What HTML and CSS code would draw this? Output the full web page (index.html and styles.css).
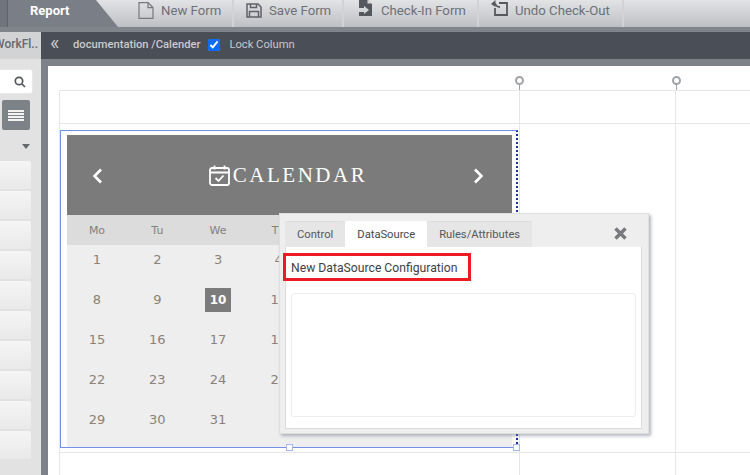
FILE: index.html
```html
<!DOCTYPE html>
<html lang="en">
<head>
    <meta charset="UTF-8">
    <meta name="viewport" content="width=device-width, initial-scale=1.0">
    <title>Form Designer</title>
    <link rel="stylesheet" href="styles.css">
</head>
<body>
    <div class="topbar">
        <div class="report-tab">Report</div>
        <a class="tool tool-new">
            <svg width="16" height="17" viewBox="0 0 16 17" fill="none" stroke="#77797e" stroke-width="1.200"><path d="M1 .6h9l5 5v10.800H1z"/><path d="M10 .6v5h5"/></svg>
            New Form
        </a>
        <a class="tool tool-save">
            <svg width="16" height="15" viewBox="0 0 16 15" fill="none" stroke="#5f6268" stroke-width="1.500"><path d="M1 1h11l3 3v10H1z"/><path d="M4.500 1v3.500h6V1M3.500 14V8.500h9V14"/></svg>
            Save Form
        </a>
        <a class="tool tool-checkin">
            <svg class="icon-up" width="15" height="17" viewBox="0 0 15 17"><path fill="#55585e" d="M1 0h8l5 5v12H1v-4h5v2l5-4-5-4v2H1z"/><path fill="#d8d9db" d="M9.500 .5V4.500H14z"/></svg>
            Check-In Form
        </a>
        <a class="tool tool-undo">
            <svg class="icon-up" width="17" height="16" viewBox="0 0 17 16" fill="none" stroke="#55585e" stroke-width="1.800"><path d="M4 8v7h12V3H8"/><path d="M9 7C6 7 5 6 4 3.500"/><path fill="#55585e" stroke="none" d="M0 4 4.500 0v7z"/></svg>
            Undo Check-Out
        </a>
    </div>

    <div class="main">
        <div class="sidebar">
            <div class="side-tab">WorkFl..</div>
            <div class="side-search">
                <svg width="12" height="12" viewBox="0 0 12 12" fill="none" stroke="#55585e" stroke-width="1.700"><circle cx="5" cy="5" r="3.700"/><path d="M7.800 7.800 11 11"/></svg>
            </div>
            <div class="side-view">
                <span></span><span></span><span></span><span></span>
            </div>
            <div class="side-caret"></div>
            <div class="side-list">
                <div class="side-item"></div>
                <div class="side-item"></div>
                <div class="side-item"></div>
                <div class="side-item"></div>
                <div class="side-item"></div>
                <div class="side-item"></div>
                <div class="side-item"></div>
                <div class="side-item"></div>
                <div class="side-item"></div>
                <div class="side-item"></div>
            </div>
        </div>

        <div class="workspace">
            <div class="crumbbar">
                <span class="collapse">«</span>
                <span class="crumb">documentation /Calender</span>
                <input type="checkbox" class="lock-check" checked>
                <span class="lock-label">Lock Column</span>
            </div>

            <div class="canvas-frame">
                <div class="canvas">
                    <div class="grid">
                        <div class="cell"></div>
                        <div class="cell"></div>
                        <div class="cell"></div>

                        <div class="cell">
                            <div class="control">
                                <div class="calendar">
                                    <div class="cal-head">
                                        <span class="cal-nav">
                                            <svg width="11" height="16" viewBox="0 0 11 16" fill="none" stroke="#fff" stroke-width="2.600"><path d="M9 1.500 2.500 8 9 14.500"/></svg>
                                        </span>
                                        <div class="cal-title">
                                            <svg width="21" height="21" viewBox="0 0 21 21" fill="none" stroke="#fff" stroke-width="1.800"><rect x="1" y="3" width="19" height="17" rx="2"/><path d="M5.500 0.500v4M15.500 0.500v4M1 7.500h19"/><path d="M6.500 13l3 3 5-5.500"/></svg>
                                            <span>CALENDAR</span>
                                        </div>
                                        <span class="cal-nav">
                                            <svg width="11" height="16" viewBox="0 0 11 16" fill="none" stroke="#fff" stroke-width="2.600"><path d="M2 1.500 8.500 8 2 14.500"/></svg>
                                        </span>
                                    </div>
                                    <div class="cal-week">
                                        <span>Mo</span><span>Tu</span><span>We</span><span>Th</span><span>Fr</span><span>Sa</span><span>Su</span>
                                    </div>
                                    <div class="cal-days">
                                        <span>1</span><span>2</span><span>3</span><span>4</span><span>5</span><span>6</span><span>7</span>
                                        <span>8</span><span>9</span><span class="today">10</span><span>11</span><span>12</span><span>13</span><span>14</span>
                                        <span>15</span><span>16</span><span>17</span><span>18</span><span>19</span><span>20</span><span>21</span>
                                        <span>22</span><span>23</span><span>24</span><span>25</span><span>26</span><span>27</span><span>28</span>
                                        <span>29</span><span>30</span><span>31</span>
                                    </div>
                                </div>
                            </div>
                        </div>
                        <div class="cell"></div>
                        <div class="cell"></div>

                        <div class="cell"></div>
                        <div class="cell"></div>
                        <div class="cell"></div>
                    </div>

                    <span class="pin pin-a"></span>
                    <span class="pin pin-b"></span>
                    <span class="handle handle-mid"></span>
                    <span class="handle handle-end"></span>

                    <div class="popup">
                        <div class="popup-tabs">
                            <a class="popup-tab">Control</a>
                            <a class="popup-tab active">DataSource</a>
                            <a class="popup-tab">Rules/Attributes</a>
                            <svg class="popup-close" width="13" height="13" viewBox="0 0 13 13" stroke="#77797e" stroke-width="3.400"><path d="M1.500 1.500l10 10M11.500 1.500l-10 10"/></svg>
                        </div>
                        <div class="popup-body">
                            <div class="ds-title">New DataSource Configuration</div>
                            <div class="ds-box"></div>
                        </div>
                    </div>
                </div>
            </div>
        </div>
    </div>
</body>
</html>
```

FILE: styles.css
```css
html, body {
    margin: 0;
    padding: 0;
    height: 100%;
    overflow: hidden;
}

body {
    font-family: Roboto, "Liberation Sans", sans-serif;
    background-color: #fff;
}

/* top toolbar */
.topbar {
    display: flex;
    align-items: stretch;
    height: 27px;
    background: linear-gradient(#e2e3e5, #bfc0c4);
    border-bottom: 5px solid #80848b;
}

.report-tab {
    width: 88px;
    padding-left: 30px;
    line-height: 21px;
    font-size: 13px;
    font-weight: 700;
    color: #fff;
    background: linear-gradient(90deg, #70747c 7px, #5f636b 7px, #5f636b 8px, #7a7e86 8px);
    clip-path: polygon(0 0, 96px 0, 118px 100%, 0 100%);
}

.tool {
    display: flex;
    align-items: center;
    gap: 7px;
    height: 27px;
    padding-bottom: 7px;
    font-size: 13.2px;
    color: #6d7077;
    border-right: 2px solid #d2d3d6;
    box-sizing: border-box;
}

.icon-up {
    margin-top: -5px;
}

.tool-new {
    width: 116px;
    padding-left: 20px;
}

.tool-save {
    width: 110px;
    padding-left: 12px;
}

.tool-checkin {
    width: 135px;
    padding-left: 14px;
    gap: 8px;
}

.tool-undo {
    width: 145px;
    padding-left: 12px;
}

.main {
    display: flex;
    height: 443px;
}

/* left column */
.sidebar {
    width: 41px;
    flex-shrink: 0;
    background: #e2e2e3;
    overflow: hidden;
}

.side-tab {
    height: 27px;
    line-height: 25px;
    margin-left: -6px;
    font-size: 12px;
    font-weight: 500;
    color: #66696f;
    white-space: nowrap;
    background: #d2d3d5;
}

.side-search {
    display: flex;
    align-items: center;
    justify-content: flex-end;
    width: 33px;
    height: 25px;
    margin-top: 10px;
    padding-right: 6px;
    box-sizing: border-box;
    background: #fff;
    border-radius: 0 3px 3px 0;
    border: 1px solid #e8e8e8;
    border-left: none;
}

.side-view {
    display: flex;
    flex-direction: column;
    justify-content: center;
    gap: 1px;
    width: 28px;
    height: 30px;
    margin: 6px 0 0 2px;
    padding: 0 6px;
    box-sizing: border-box;
    background: #7d8188;
    border-radius: 2px;
}

.side-view span {
    display: block;
    height: 2px;
    background: #f2f2f2;
}

.side-caret {
    width: 0;
    height: 0;
    margin: 14px 0 0 22px;
    border-left: 4px solid transparent;
    border-right: 4px solid transparent;
    border-top: 5px solid #66696f;
}

.side-list {
    display: flex;
    flex-direction: column;
    gap: 2px;
    margin-top: 12px;
}

.side-item {
    width: 31px;
    height: 28px;
    background: linear-gradient(#f5f5f5, #e9e9e9);
    border-radius: 0 2px 2px 0;
}

/* breadcrumb bar */
.workspace {
    flex: 1;
    display: flex;
    flex-direction: column;
    min-width: 0;
}

.crumbbar {
    display: flex;
    align-items: center;
    height: 27px;
    flex-shrink: 0;
    padding: 0 0 2px 9px;
    box-sizing: border-box;
    background: #4a4e56;
}

.collapse {
    width: 23px;
    margin-top: -3px;
    font-size: 20px;
    line-height: 20px;
    color: #c9cbce;
}

.crumb {
    font-size: 11.2px;
    font-weight: 500;
    color: #c9cbce;
}

.lock-check {
    width: 12px;
    height: 12px;
    margin: 0 9px 0 8px;
    accent-color: #0a6cf5;
}

.lock-label {
    font-size: 11.2px;
    color: #c6c8cc;
}

/* canvas */
.canvas-frame {
    flex: 1;
    padding: 7px 0 0 7px;
    background: #7d8188;
}

.canvas {
    position: relative;
    height: 100%;
    box-sizing: border-box;
    padding: 24px 0 0 11px;
    background: #fff;
}

.grid {
    display: grid;
    grid-template-columns: 460px 156px 1fr;
    grid-template-rows: 33px 329px 1fr;
    height: 100%;
}

.cell {
    border-top: 1px solid #e6e6e6;
    border-left: 1px solid #e6e6e6;
    min-width: 0;
}

.control {
    height: 312px;
    margin: 6px 1px 0 0;
    padding: 4px 4px 0 6px;
    border: 1px solid #7390e8;
    border-right: 2px dotted #1c2f9c;
    overflow: hidden;
}

.calendar {
    height: 100%;
    background: #eee;
    overflow: hidden;
}

.cal-head {
    display: flex;
    align-items: center;
    justify-content: space-between;
    height: 80px;
    padding: 0 28px 0 25px;
    background: #7b7b7b;
}

.cal-title {
    display: flex;
    align-items: center;
    gap: 3px;
    font-family: "Liberation Serif", serif;
    font-size: 21px;
    letter-spacing: 2.5px;
    color: #fff;
}

.cal-nav {
    display: flex;
    margin-top: 2px;
}

.cal-week,
.cal-days {
    display: grid;
    grid-template-columns: 60px repeat(6, 60.7px);
    font-family: "DejaVu Sans", sans-serif;
    text-align: center;
}

.cal-week {
    height: 30px;
    line-height: 31px;
    font-size: 11px;
    color: #85807a;
    background: #dcdcdc;
}

.cal-days {
    grid-auto-rows: 40px;
    font-size: 13px;
    line-height: 30px;
    color: #8b8178;
}

.cal-days .today {
    justify-self: center;
    width: 26px;
    height: 24px;
    margin-top: 3px;
    line-height: 24px;
    font-size: 12px;
    font-weight: 700;
    color: #fff;
    background: #7b7b7b;
}

/* things lying over the grid */
.pin {
    position: absolute;
    top: 10px;
    width: 5px;
    height: 5px;
    border: 2px solid #a0a3a7;
    border-radius: 50%;
    background: #fff;
}

.pin::after {
    content: "";
    position: absolute;
    left: 2px;
    top: 7px;
    width: 1px;
    height: 5px;
    background: #a0a3a7;
}

.pin-a {
    left: 467px;
}

.pin-b {
    left: 624px;
}

.handle {
    position: absolute;
    top: 378px;
    width: 5px;
    height: 5px;
    border: 1px solid #a3b8f0;
    background: #fff;
}

.handle-mid {
    left: 238px;
}

.handle-end {
    left: 465px;
}

/* properties popup */
.popup {
    position: absolute;
    left: 231px;
    top: 147px;
    width: 370px;
    height: 221px;
    box-sizing: border-box;
    padding: 7px 6px 4px 5px;
    background: #eee;
    border: 1px solid #dfdfdf;
    box-shadow: 2px 2px 3px rgba(120, 125, 140, 0.55);
}

.popup-tabs {
    display: flex;
    align-items: stretch;
    height: 26px;
}

.popup-tab {
    padding: 0 12px;
    line-height: 27px;
    font-size: 11.2px;
    color: #55585c;
    background: #e6e6e6;
    border-radius: 3px 3px 0 0;
    box-shadow: inset 0 1px 0 #dedede;
}

.popup-tab.active {
    background: #fff;
    color: #45484c;
    box-shadow: none;
}

.popup-close {
    margin: 6px 15px 0 auto;
}

.popup-body {
    height: 182px;
    box-sizing: border-box;
    padding: 6px 5px 0 5px;
    background: #fff;
    border: 1px solid #dcdcdc;
    border-top: none;
}

.ds-title {
    width: 188px;
    height: 28px;
    margin-left: -8px;
    box-sizing: border-box;
    padding-left: 5px;
    line-height: 24px;
    font-size: 12.2px;
    color: #3c3f44;
    border: 3px solid #ed1c24;
}

.ds-box {
    height: 124px;
    margin-top: 12px;
    box-sizing: border-box;
    border: 1px solid #ececec;
    border-radius: 3px;
}
```
